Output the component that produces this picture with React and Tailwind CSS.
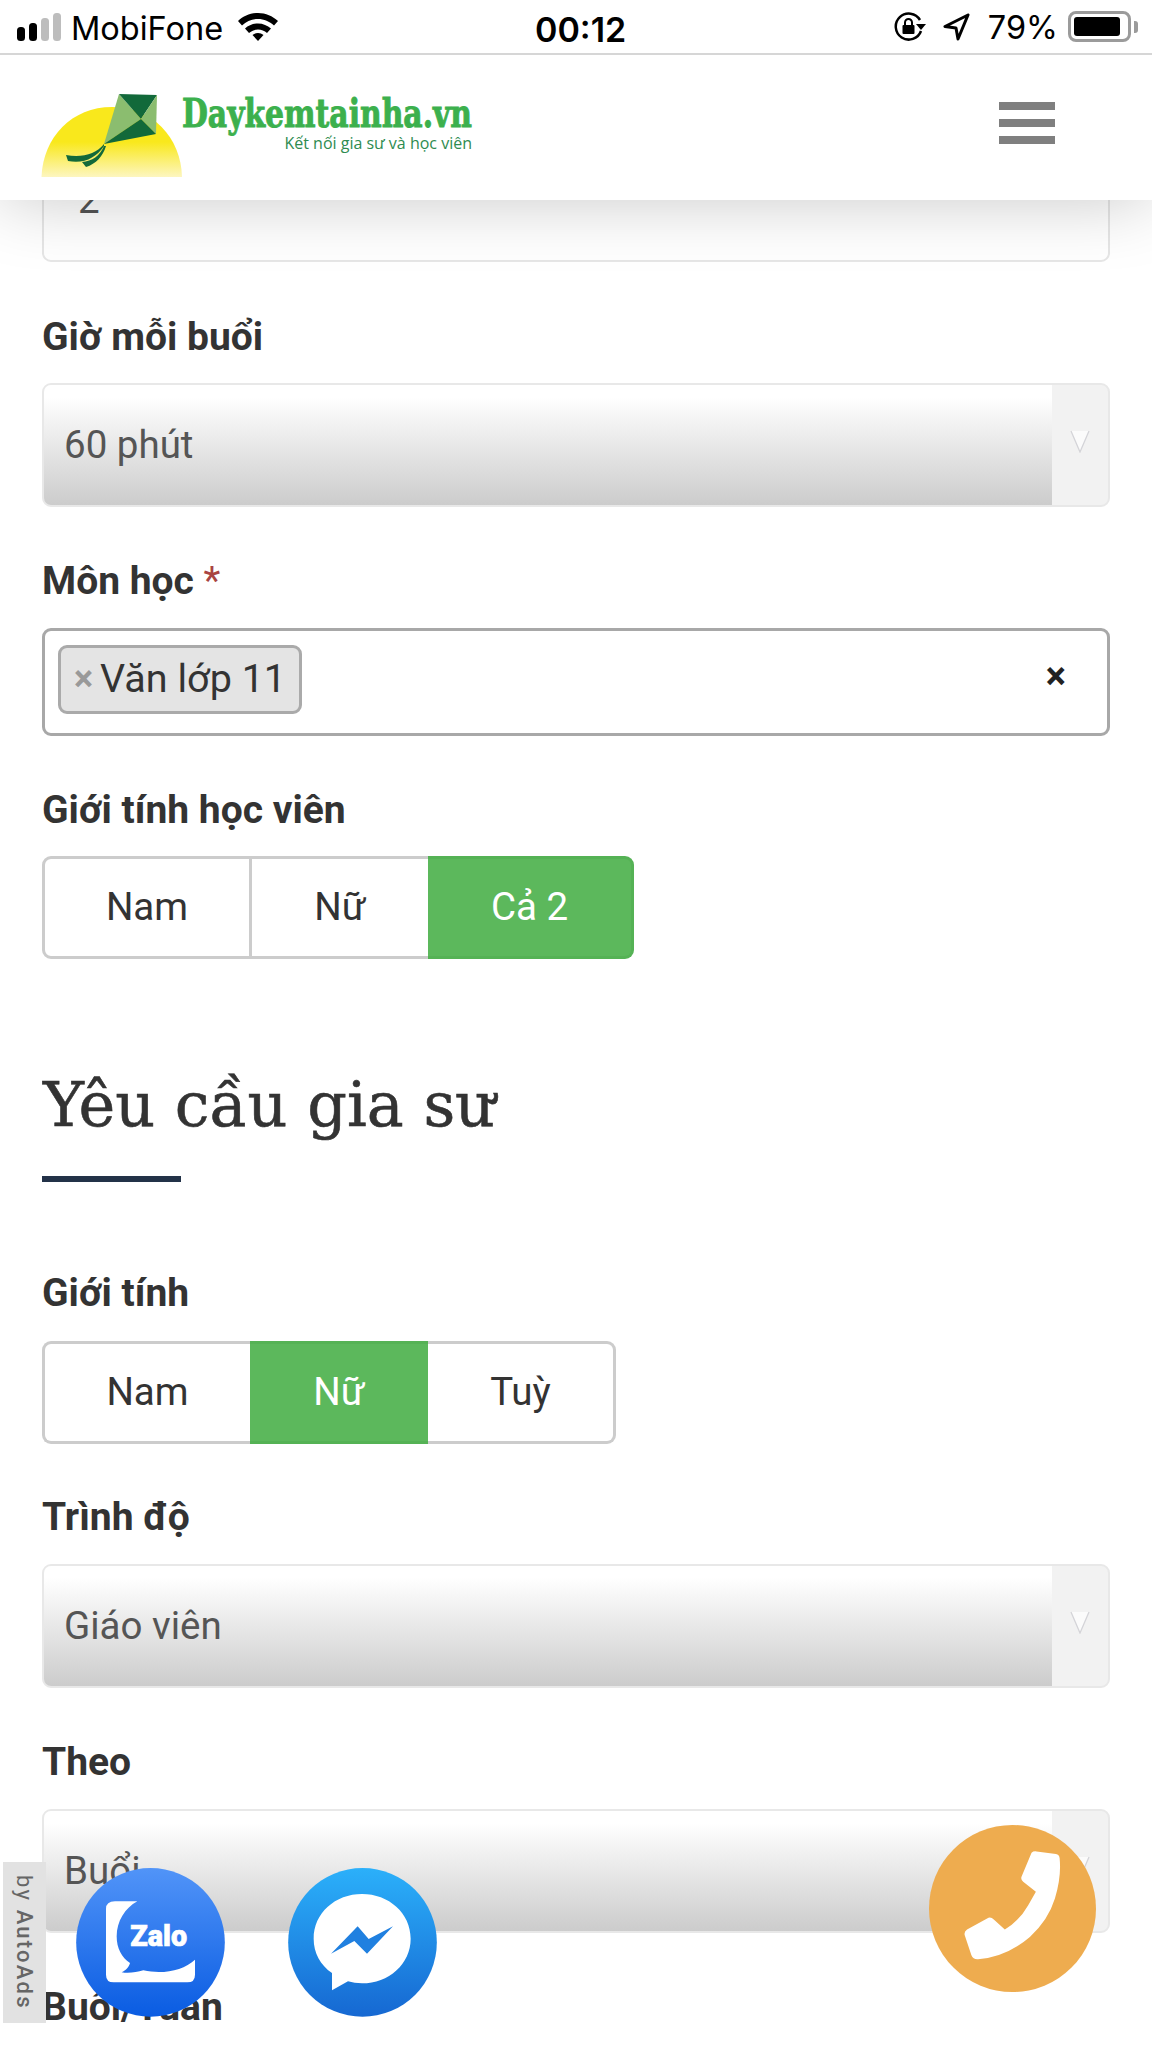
import React from "react";

const Label = ({ children, className = "" }) => (
  <div className={"h-[50px] leading-[50px] text-[39px] font-bold text-[#333] whitespace-nowrap " + className}>{children}</div>
);

const Select = ({ value, className = "" }) => (
  <div className={"flex h-[124px] w-[1068px] rounded-[9px] border-2 border-[#e8e8e8] overflow-hidden bg-[#f2f2f2] " + className}>
    <div className="flex-1 flex items-center pl-[20px] text-[38.5px] text-[#555] bg-gradient-to-b from-white from-[10%] to-[#cccccc]">{value}</div>
    <div className="w-[56px] flex justify-center pt-[44px]">
      <svg width="20" height="24" viewBox="0 0 20 24"><path d="M1 2h18L10 23z" fill="#fbfbfb" stroke="none" /><path d="M1 2L10 23L19 2" fill="none" stroke="#d4d4d8" strokeWidth="1.3" /></svg>
    </div>
  </div>
);

const Seg = ({ w, active, children, first, last, divider }) => (
  <div
    className={
      "h-full flex items-center justify-center pb-[2px] text-[38.5px] border-y-[3px] " + w + " " +
      (active ? "bg-[#5cb85c] text-white border-[#55b255]" : "bg-white text-[#333] border-[#cccccc]") + " " +
      (first ? "border-l-[3px] rounded-l-[9px] " : "") +
      (last ? "border-r-[3px] rounded-r-[9px] " : "") +
      (divider ? "border-r-[3px] " : "")
    }
  >
    {children}
  </div>
);

function Logo() {
  return (
    <div className="relative w-[440px] h-[90px]">
      <svg className="absolute left-0 top-0" width="150" height="90" viewBox="41 90 150 90">
        <defs>
          <linearGradient id="sun" x1="0" y1="0" x2="0" y2="1">
            <stop offset="0.5" stopColor="#f9e81c" />
            <stop offset="1" stopColor="#fdf6c0" />
          </linearGradient>
        </defs>
        <path d="M41.5 175C43 135 72 105 112 105C152 105 181 135 182 175Z" fill="url(#sun)" />
        <path d="M119 92L141 117L104 142Z" fill="#8bbd6f" />
        <path d="M119 92L157 93L141 117Z" fill="#12693a" />
        <path d="M157 93L156 132L141 117Z" fill="#8bbd6f" />
        <path d="M141 117L156 132L104 142Z" fill="#12693a" />
        <path d="M104 142C96 152 82 156 66 153L68 159C84 162 96 156 104 144Z" fill="#12693a" />
        <path d="M104 144C100 154 92 159 82 160L86 165C96 162 103 154 106 144Z" fill="#12693a" />
      </svg>
      <div className="absolute left-[141px] top-[3px] text-[40px] leading-[36px] font-bold text-[#3cb04d] whitespace-nowrap origin-left scale-x-[0.745] [-webkit-text-stroke:1px_#3cb04d] font-['DejaVu_Serif']">Daykemtainha.vn</div>
      <div className="absolute right-[9px] top-[40px] text-[16px] leading-[22px] text-[#2e8b50] whitespace-nowrap font-['Open_Sans']">Kết nối gia sư và học viên</div>
    </div>
  );
}

function StatusBar() {
  return (
    <div className="relative z-20 h-[55px] bg-white border-b-2 border-[#d6d6d6] flex items-center text-black font-['Inter'] text-[32.5px] pl-[17px] pr-[14px]">
      <svg width="44" height="28" viewBox="0 0 44 28">
        <rect x="0" y="14" width="8" height="14" rx="3.5" fill="#000" />
        <rect x="12" y="10" width="8" height="18" rx="3.5" fill="#000" />
        <rect x="24" y="5" width="8" height="23" rx="3.5" fill="#bdbdbd" />
        <rect x="36" y="0" width="8" height="28" rx="3.5" fill="#bdbdbd" />
      </svg>
      <span className="ml-[10px] mt-[5px]">MobiFone</span>
      <svg className="ml-[15px]" width="40" height="28" viewBox="0 0 40 28" fill="#000">
        <path d="M20 0C12 0 5.500 3 0 8L4 12.500C8.500 8.500 14 6 20 6C26 6 31.500 8.500 36 12.500L40 8C34.500 3 28 0 20 0Z" />
        <path d="M20 10.500C15 10.500 10.500 12.500 7 15.500L11 20C13.500 17.800 16.500 16.500 20 16.500C23.500 16.500 26.500 17.800 29 20L33 15.500C29.500 12.500 25 10.500 20 10.500Z" />
        <path d="M20 20C18 20 16 20.700 14.500 22L20 28L25.500 22C24 20.700 22 20 20 20Z" />
      </svg>
      <span className="absolute left-[535px] top-[4px] text-[34px] font-semibold">00:12</span>
      <div className="ml-auto flex items-center">
        <svg width="32" height="30" viewBox="0 0 32 30" fill="none">
          <path d="M26 8A13 13 0 1 0 27 19" stroke="#000" strokeWidth="2.500" />
          <path d="M22 12H32L27 18Z" fill="#000" />
          <rect x="8.500" y="13" width="12" height="9" rx="1" fill="#000" />
          <path d="M11 13V10.500A3.500 3.500 0 0 1 18 10.500V13" stroke="#000" strokeWidth="2" />
        </svg>
        <svg className="ml-[17px]" width="27" height="28" viewBox="0 0 27 28" fill="none">
          <path d="M25 2L2 13.500L13 15L15 26Z" stroke="#000" strokeWidth="3" strokeLinejoin="round" />
        </svg>
        <span className="ml-[18px] mt-[4px]">79%</span>
        <div className="ml-[10px] w-[63px] h-[31px] rounded-[8px] border-[3px] border-[#9b9b9b] p-[3px]">
          <div className="w-[46px] h-full rounded-[3px] bg-black" />
        </div>
        <div className="ml-[3px] w-[4px] h-[12px] rounded-r-[3px] bg-[#9b9b9b]" />
      </div>
    </div>
  );
}

export default function App() {
  return (
    <div className="relative w-[1152px] h-[2048px] overflow-hidden flex flex-col bg-white font-['Roboto',sans-serif]">
      <StatusBar />
      <header className="relative z-10 h-[145px] bg-white shadow-[0_0_70px_rgba(0,0,0,0.22)] flex items-start justify-between pl-[41px] pr-[97px] pt-[37px]">
        <Logo />
        <div className="mt-[10px] w-[56px] flex flex-col gap-[9px]">
          <div className="h-[8px] bg-[#7f7f7f]" />
          <div className="h-[8px] bg-[#7f7f7f]" />
          <div className="h-[8px] bg-[#7f7f7f]" />
        </div>
      </header>
      <main className="flex-1 px-[42px]">
        <div className="-mt-[62px] h-[124px] w-[1068px] rounded-[9px] border-2 border-[#e6e6e6] bg-white flex items-center pl-[34px] text-[38.5px] text-[#555]">2</div>

        <Label className="mt-[50px] mb-[21px]">Giờ mỗi buổi</Label>
        <Select value="60 phút" />

        <Label className="mt-[49px] mb-[22px]">Môn học <span className="text-[#a94442] font-normal">*</span></Label>
        <div className="h-[108px] w-[1068px] rounded-[9px] border-[3px] border-[#a8a8a8] flex items-center pl-[13px] pr-[41px] justify-between">
          <div className="h-[69px] w-[244px] -mt-[6px] rounded-[9px] border-[3px] border-[#aaaaaa] bg-[#e4e4e4] flex items-center pl-[13px] text-[39.5px] text-[#333] whitespace-nowrap">
            <span className="font-bold text-[#999] mr-[7px] text-[36px]">×</span>Văn lớp 11
          </div>
          <span className="font-bold text-[#222] text-[38px] -mt-[12px]">×</span>
        </div>

        <Label className="mt-[49px] mb-[21px]">Giới tính học viên</Label>
        <div className="flex h-[103px] w-[592px]">
          <Seg w="w-[210px]" first divider>Nam</Seg>
          <Seg w="w-[176px]">Nữ</Seg>
          <Seg w="flex-1" active last>Cả 2</Seg>
        </div>

        <div className="mt-[91px] ml-[1px] h-[110px] leading-[110px] text-[62px] text-[#333] font-['DejaVu_Serif'] [-webkit-text-stroke:0.6px_#333] whitespace-nowrap">Yêu cầu gia sư</div>
        <div className="mt-[16px] h-[6px] w-[139px] bg-[#233248]" />

        <Label className="mt-[86px] mb-[23px]">Giới tính</Label>
        <div className="flex h-[103px] w-[574px]">
          <Seg w="w-[208px]" first>Nam</Seg>
          <Seg w="w-[178px]" active>Nữ</Seg>
          <Seg w="flex-1" last>Tuỳ</Seg>
        </div>

        <Label className="mt-[48px] mb-[22px]">Trình độ</Label>
        <Select value="Giáo viên" />

        <Label className="mt-[49px] mb-[22px]">Theo</Label>
        <Select value="Buổi" />

        <Label className="mt-[49px]">Buổi/Tuần</Label>
      </main>

      <div className="absolute left-[3px] top-[1862px] w-[43px] h-[161px] bg-[#e2e2e2] flex items-center justify-center">
        <span className="[writing-mode:vertical-rl] text-[22px] tracking-[2.2px] text-[#666] whitespace-nowrap">by <span className="font-medium">AutoAds</span></span>
      </div>

      <svg className="absolute left-[76px] top-[1868px]" width="149" height="149" viewBox="228 265 447 447">
        <defs>
          <linearGradient id="za" x1="0" y1="0" x2="0" y2="1"><stop offset="0" stopColor="#5194f8" /><stop offset="1" stopColor="#0a5ce2" /></linearGradient>
          <linearGradient id="me" x1="0" y1="0" x2="0" y2="1"><stop offset="0" stopColor="#2bb0fa" /><stop offset="1" stopColor="#1668d2" /></linearGradient>
        </defs>
        <circle cx="451.500" cy="488" r="223" fill="url(#za)" />
        <path d="M345 365H412C375 385 350 425 350 470C350 505 365 535 390 550C388 560 378 572 365 578C385 582 410 578 430 572C490 585 550 572 585 540V585Q585 608 562 608H341Q318 608 318 585V388Q318 365 345 365Z" fill="#fff" />
        <text x="476" y="498" textAnchor="middle" fill="#fff" stroke="#fff" strokeWidth="2" fontSize="86" fontWeight="900" fontFamily="Roboto">Zalo</text>
      </svg>

      <svg className="absolute left-[288px] top-[1868px]" width="149" height="149" viewBox="863 265 447 447">
        <circle cx="1086.500" cy="488" r="223" fill="url(#me)" />
        <path d="M1085 343C1165 343 1231 400 1231 477C1231 553 1165 611 1085 611C1070 611 1056 609 1043 605L995 632L995 580C960 556 940 520 940 477C940 400 1005 343 1085 343Z" fill="#fff" />
        <path d="M992 522L1072 440L1105 478L1178 440L1100 522L1062 484Z" fill="#2080e0" />
      </svg>

      <svg className="absolute left-[929px] top-[1825px]" width="167" height="167" viewBox="148 135 500 500">
        <circle cx="398" cy="385" r="250" fill="#eeac4f" />
        <path d="M455 218Q460 213 470 214L528 222Q538 224 539 234Q545 290 525 355Q505 420 450 470Q380 530 295 537Q280 538 275 525L255 465Q252 455 262 448L322 415Q332 408 342 418L375 448Q420 420 445 375L468 335L430 305Q422 298 425 290Z" fill="#fff" />
      </svg>
    </div>
  );
}
